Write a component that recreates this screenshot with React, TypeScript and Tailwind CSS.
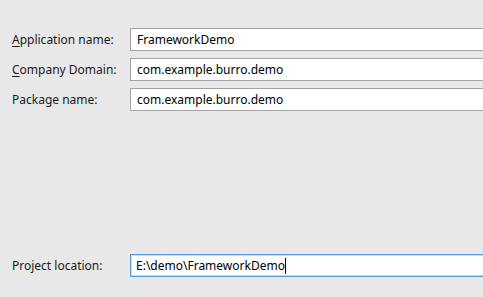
import React from 'react';

const font = { fontFamily: '"Noto Sans", "Open Sans", sans-serif' };

function Field({ label, value, mnemonic, focused }: { label: string; value: string; mnemonic?: boolean; focused?: boolean }) {
  return (
    <div className="flex items-center h-[23px]">
      <div className="w-[118px] shrink-0 text-[12px] text-[#1a1a1a] leading-none whitespace-nowrap">
        {mnemonic ? (
          <>
            <span className="underline underline-offset-2">{label[0]}</span>
            {label.slice(1)}
          </>
        ) : (
          label
        )}
      </div>
      {focused ? (
        <div className="flex-1 h-[23px] bg-white border border-[#5b9bd5] shadow-[inset_0_0_0_1px_#c5dcf3] flex items-center pl-[5px] text-[12px] text-black whitespace-nowrap">
          <span>{value}</span>
          <span className="w-px h-[16px] bg-black" />
        </div>
      ) : (
        <div className="flex-1 h-[23px] bg-white border border-[#a3a3a3] flex items-center pl-[6px] text-[12px] text-black whitespace-nowrap">
          {value}
        </div>
      )}
    </div>
  );
}

export default function App() {
  return (
    <div className="w-[483px] h-[297px] bg-[#e8e8e8] overflow-hidden" style={font}>
      <div className="w-[520px] pl-[12px] pt-[28px] flex flex-col">
        <div className="flex flex-col gap-[7px]">
          <Field label="Application name:" value="FrameworkDemo" mnemonic />
          <Field label="Company Domain:" value="com.example.burro.demo" mnemonic />
          <Field label="Package name:" value="com.example.burro.demo" />
        </div>
        <div className="mt-[143px]">
          <Field label="Project location:" value="E:\demo\FrameworkDemo" focused />
        </div>
      </div>
    </div>
  );
}
